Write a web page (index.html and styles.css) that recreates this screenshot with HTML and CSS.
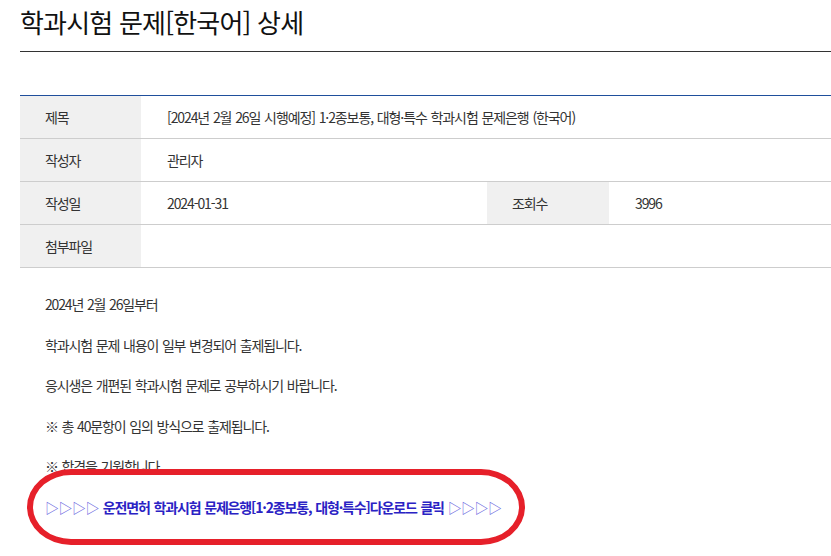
FILE: index.html
```html
<!DOCTYPE html>
<html lang="ko">
<head>
<meta charset="utf-8">
<title>학과시험 문제[한국어] 상세</title>
<link rel="stylesheet" href="styles.css">
</head>
<body>
<div class="page">
  <header class="head">
    <h1 class="title">학과시험 문제[한국어] 상세</h1>
  </header>
  <div class="info">
    <div class="lbl">제목</div>
    <div class="val span3">[2024년 2월 26일 시행예정] 1·2종보통, 대형·특수 학과시험 문제은행 (한국어)</div>
    <div class="lbl">작성자</div>
    <div class="val span3">관리자</div>
    <div class="lbl">작성일</div>
    <div class="val">2024-01-31</div>
    <div class="lbl">조회수</div>
    <div class="val">3996</div>
    <div class="lbl">첨부파일</div>
    <div class="val span3"></div>
  </div>
  <div class="content">
    <p>2024년 2월 26일부터</p>
    <p>학과시험 문제 내용이 일부 변경되어 출제됩니다.</p>
    <p>응시생은 개편된 학과시험 문제로 공부하시기 바랍니다.</p>
    <p>※ 총 40문항이 임의 방식으로 출제됩니다.</p>
    <p>※ 합격을 기원합니다.</p>
    <p class="link"><span class="arr">▷▷▷▷</span> 운전면허 학과시험 문제은행[1·2종보통, 대형·특수]다운로드 클릭 <span class="arr">▷▷▷▷</span><span class="annot"></span></p>
  </div>
</div>
</body>
</html>
```
FILE: styles.css
```css
html, body {
  margin: 0;
  padding: 0;
  background: #fff;
}
body {
  font-family: "Noto Sans CJK KR", "Noto Sans", sans-serif;
  color: #333;
  overflow: hidden;
  min-height: 556px;
}
.page {
  margin-left: 20px;
  width: 811px;
  min-height: 556px;
}
.head {
  padding-top: 6px;
  padding-bottom: 13px;
  border-bottom: 1px solid #333;
}
.title {
  margin: 0;
  font-size: 26px;
  line-height: 32px;
  font-weight: 400;
  letter-spacing: -0.8px;
  color: #111;
}
.info {
  margin-top: 43px;
  border-top: 1px solid #1f4f9c;
  display: grid;
  grid-template-columns: 121px 346px 122px 1fr;
  font-size: 14px;
  letter-spacing: -1.1px;
  word-spacing: 1px;
}
.lbl, .val {
  height: 42px;
  line-height: 42px;
  border-bottom: 1px solid #cdcdcd;
  padding-left: 25px;
}
.lbl {
  background: #f0f0f0;
  color: #333;
}
.val {
  padding-left: 26px;
}
.span3 {
  grid-column: span 3;
}
.content {
  padding: 16px 0 0 25px;
  font-size: 14px;
  letter-spacing: -1.15px;
  word-spacing: 1px;
}
.content p {
  margin: 0;
  line-height: 40.6px;
}
.link {
  position: relative;
  font-weight: 700;
  color: #2a22c4;
}
.arr {
  font-weight: 400;
  color: #6a66e0;
  letter-spacing: -0.5px;
}
.annot {
  position: absolute;
  left: -18px;
  top: -18px;
  width: 486px;
  height: 64px;
  border: 6px solid #e6202a;
  border-radius: 44px / 38px;
  pointer-events: none;
}
```
